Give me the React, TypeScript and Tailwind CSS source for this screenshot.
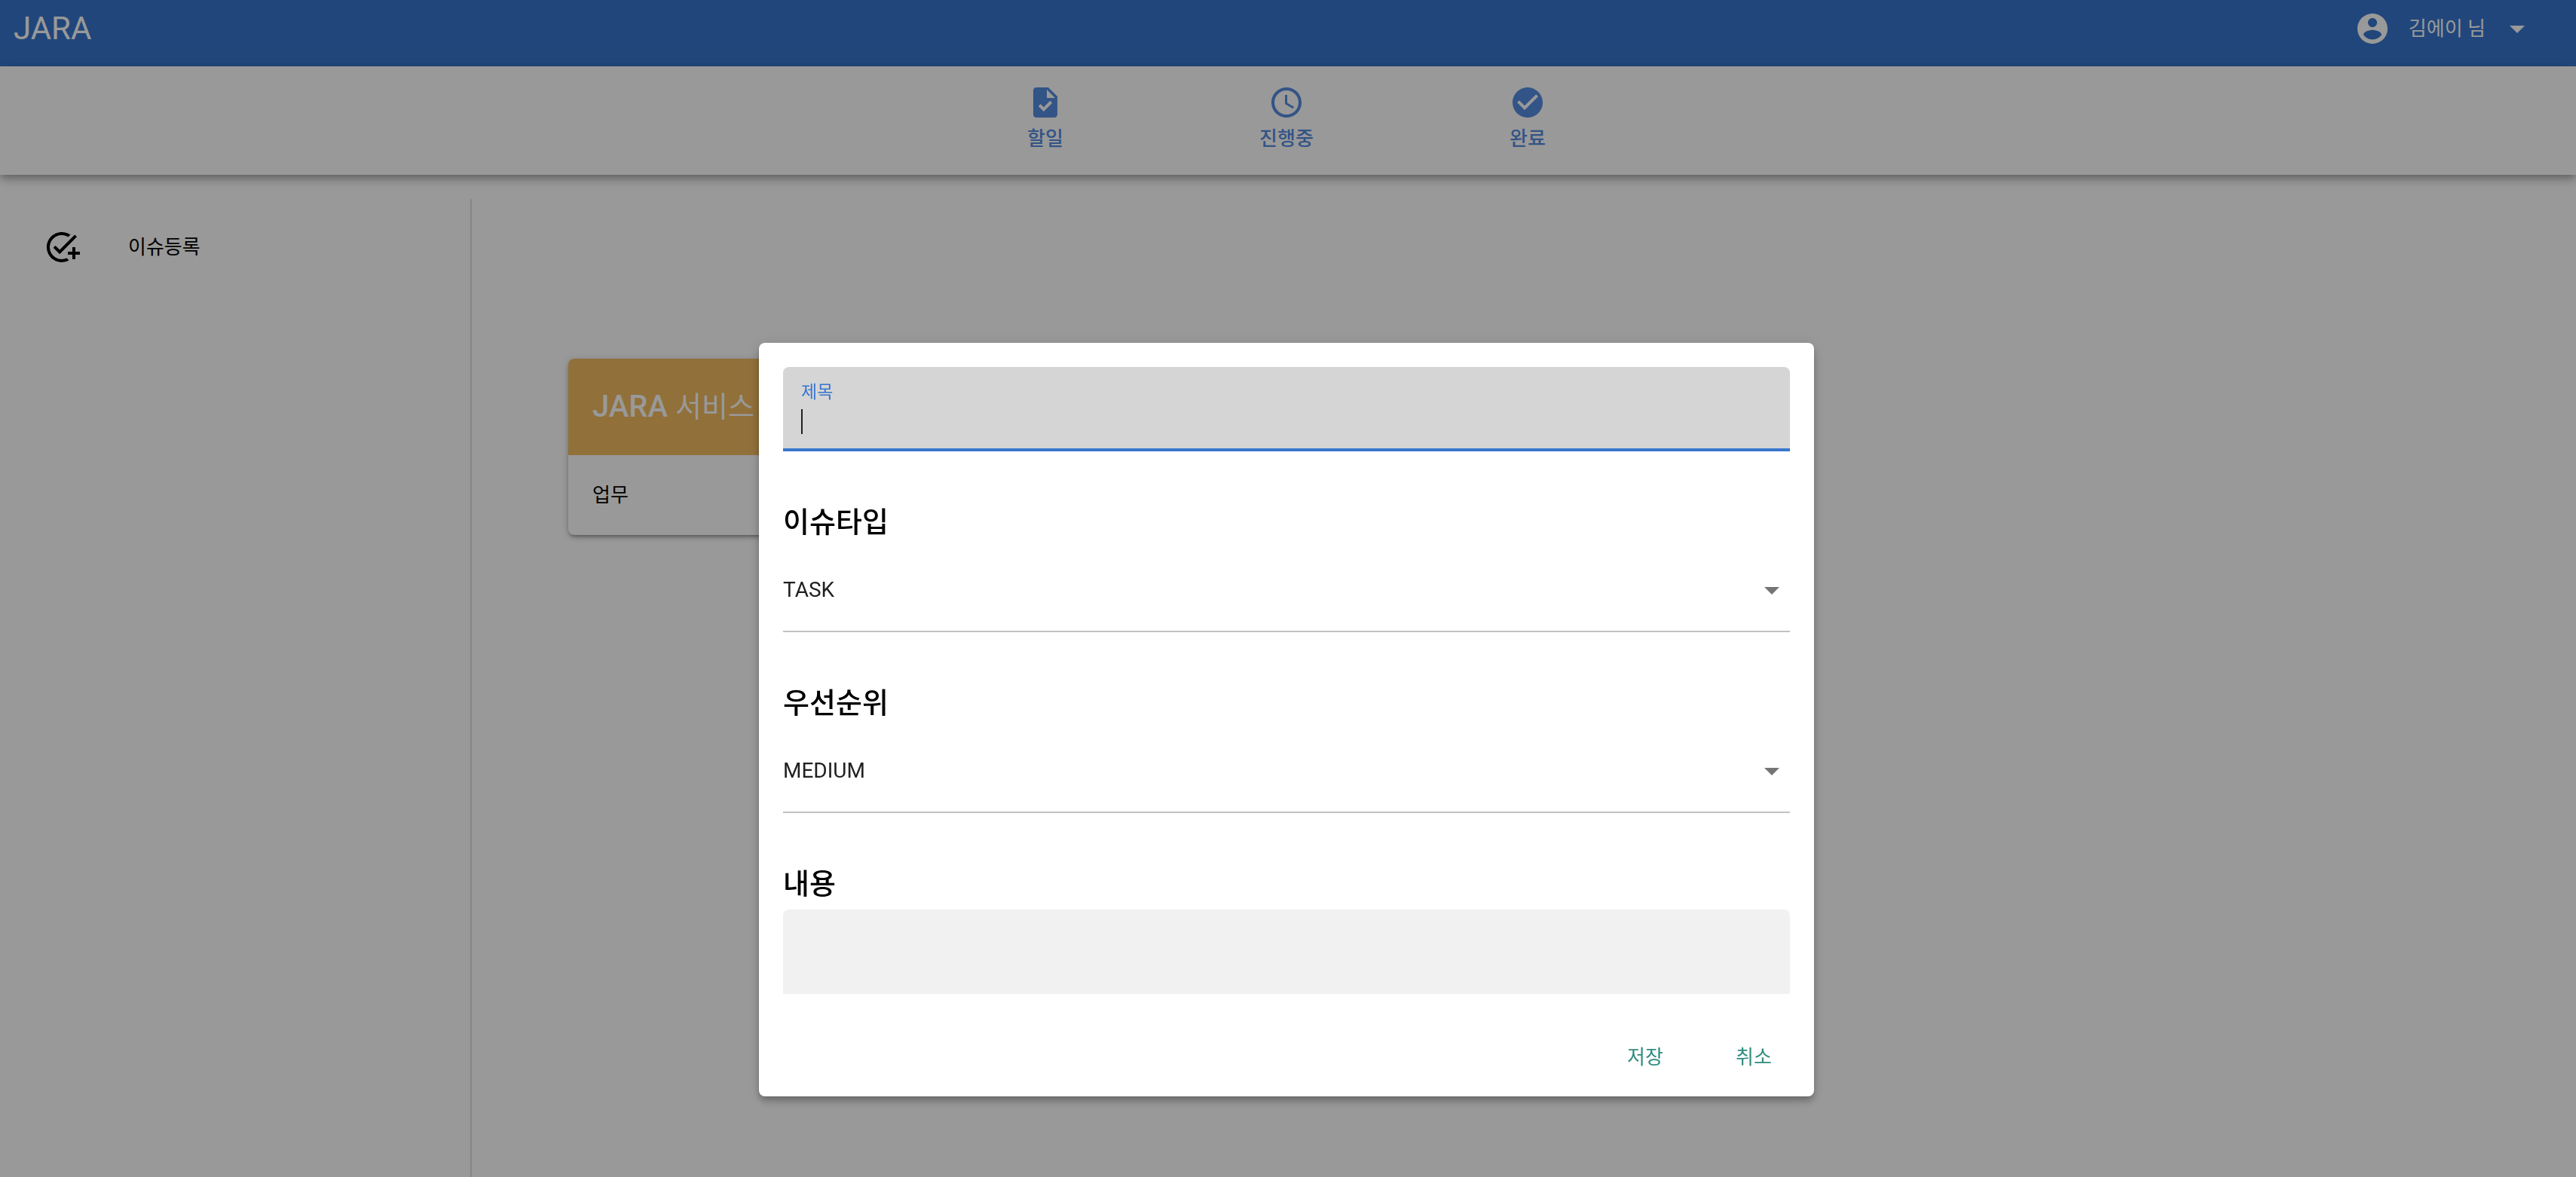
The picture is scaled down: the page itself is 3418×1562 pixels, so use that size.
import { useState } from "react";
import type { ReactNode } from "react";
import { MdAddTask, MdArrowDropDown, MdCheckCircle, MdSchedule, MdTask } from "react-icons/md";

function AccountIcon() {
  return (
    <svg viewBox="0 0 24 24" fill="currentColor" className="size-12" aria-hidden="true">
      <path d="M12 2C6.48 2 2 6.48 2 12s4.48 10 10 10 10-4.48 10-10S17.52 2 12 2zm0 3c1.66 0 3 1.34 3 3s-1.34 3-3 3-3-1.34-3-3 1.34-3 3-3zm0 14.2c-2.5 0-4.71-1.28-6-3.22.03-1.99 4-3.08 6-3.08 1.99 0 5.97 1.09 6 3.08-1.29 1.94-3.5 3.22-6 3.22z" />
    </svg>
  );
}

function Header() {
  return (
    <header className="flex h-22 items-center justify-between bg-[#3876cd] pr-[54px] pb-3 pl-[18px] text-white">
      <a href="#home" className="text-[42px] leading-none">
        JARA
      </a>
      <button type="button" className="flex items-center text-[26px]">
        <AccountIcon />
        <span className="mr-[18px] ml-6">김에이 님</span>
        <MdArrowDropDown className="size-12" />
      </button>
    </header>
  );
}

function Tab({ icon, label }: { icon: ReactNode; label: string }) {
  return (
    <button type="button" className="flex h-36 w-80 flex-col items-center pt-6 text-[26px] font-medium">
      {icon}
      <span className="leading-12">{label}</span>
    </button>
  );
}

function Navigation() {
  return (
    <nav className="relative flex justify-center bg-white pr-1 text-[#558cdf] shadow-[0_4px_8px_-2px_rgba(0,0,0,0.2),0_8px_10px_0_rgba(0,0,0,0.14),0_2px_20px_0_rgba(0,0,0,0.12)]">
      <Tab icon={<MdTask className="size-12" />} label="할일" />
      <Tab icon={<MdSchedule className="size-12" />} label="진행중" />
      <Tab icon={<MdCheckCircle className="size-12" />} label="완료" />
    </nav>
  );
}

function Sidebar() {
  return (
    <aside className="w-[626px] shrink-0 border-r-2 border-black/12 px-[58px] pt-4">
      <button type="button" className="flex h-24 w-full items-center gap-16 text-[26px]">
        <MdAddTask className="size-12" />
        <span>이슈등록</span>
      </button>
    </aside>
  );
}

function ServiceCard() {
  return (
    <article className="w-[560px] overflow-hidden rounded-lg bg-white shadow-[0_2px_10px_0_rgba(0,0,0,0.2),0_4px_4px_0_rgba(0,0,0,0.14),0_6px_2px_-4px_rgba(0,0,0,0.12)]">
      <h2 className="flex h-32 items-center bg-[#f2bb62] px-8 text-[40px] font-medium text-white">
        <span>
          JARA <span className="text-[38px] font-normal">서비스</span>
        </span>
      </h2>
      <p className="flex h-[106px] items-center px-8 text-[26px]">업무</p>
    </article>
  );
}

const heading = "mt-16 mb-1 block text-[38px] leading-[60px] font-medium";

function SelectField({ id, label, options, initial }: { id: string; label: string; options: string[]; initial: string }) {
  const [value, setValue] = useState(initial);
  return (
    <div>
      <label htmlFor={id} className={heading}>
        {label}
      </label>
      <div className="relative border-b-2 border-[#c1c1c1]">
        <select
          id={id}
          value={value}
          onChange={(e) => setValue(e.target.value)}
          className="block h-[110px] w-full appearance-none bg-transparent pt-0.5 pr-12 text-[28px] text-[#212121] outline-none"
        >
          {options.map((o) => (
            <option key={o}>{o}</option>
          ))}
        </select>
        <MdArrowDropDown className="pointer-events-none absolute top-8 right-0 size-12 text-[#757575]" />
      </div>
    </div>
  );
}

function IssueDialog() {
  return (
    <div className="fixed inset-0 flex items-start justify-center bg-black/40 pt-[455px] pr-1">
      <form
        role="dialog"
        aria-label="이슈등록"
        className="w-[1400px] rounded-lg bg-white shadow-[0_4px_8px_-2px_rgba(0,0,0,0.2),0_8px_10px_0_rgba(0,0,0,0.14),0_2px_20px_0_rgba(0,0,0,0.12)]"
      >
        <div className="p-8">
          <div className="h-28 rounded-t-lg border-b-4 border-[#3876cd] bg-[#d5d5d5] px-6 pt-4">
            <label htmlFor="title" className="block text-[23px] leading-9 text-[#3876cd]">
              제목
            </label>
            <div className="flex items-center pt-0.5">
              <span className="h-[33px] w-0.5 bg-[#212121]" />
              <input id="title" type="text" className="h-9 w-full bg-transparent text-[28px] caret-transparent outline-none" />
            </div>
          </div>
          <SelectField id="type" label="이슈타입" options={["TASK", "STORY", "BUG"]} initial="TASK" />
          <SelectField id="priority" label="우선순위" options={["HIGH", "MEDIUM", "LOW"]} initial="MEDIUM" />
          <label htmlFor="content" className={heading}>
            내용
          </label>
          <input
            id="content"
            type="text"
            className="block h-28 w-full rounded-t-lg bg-[#f1f1f1] px-6 text-[28px] outline-none"
          />
        </div>
        <div className="flex h-26 items-center justify-end gap-4 px-4 text-[26px] text-[#2f8c7e]">
          <button type="button" className="h-18 w-32">
            저장
          </button>
          <button type="button" className="h-18 w-32">
            취소
          </button>
        </div>
      </form>
    </div>
  );
}

export default function App() {
  return (
    <div className="flex min-h-screen flex-col bg-white font-[Roboto,'Noto_Sans_CJK_KR',sans-serif] text-black">
      <Header />
      <Navigation />
      <div className="flex flex-1 pt-8">
        <Sidebar />
        <main className="flex-1 px-32 pt-[212px]">
          <ServiceCard />
        </main>
      </div>
      <IssueDialog />
    </div>
  );
}
